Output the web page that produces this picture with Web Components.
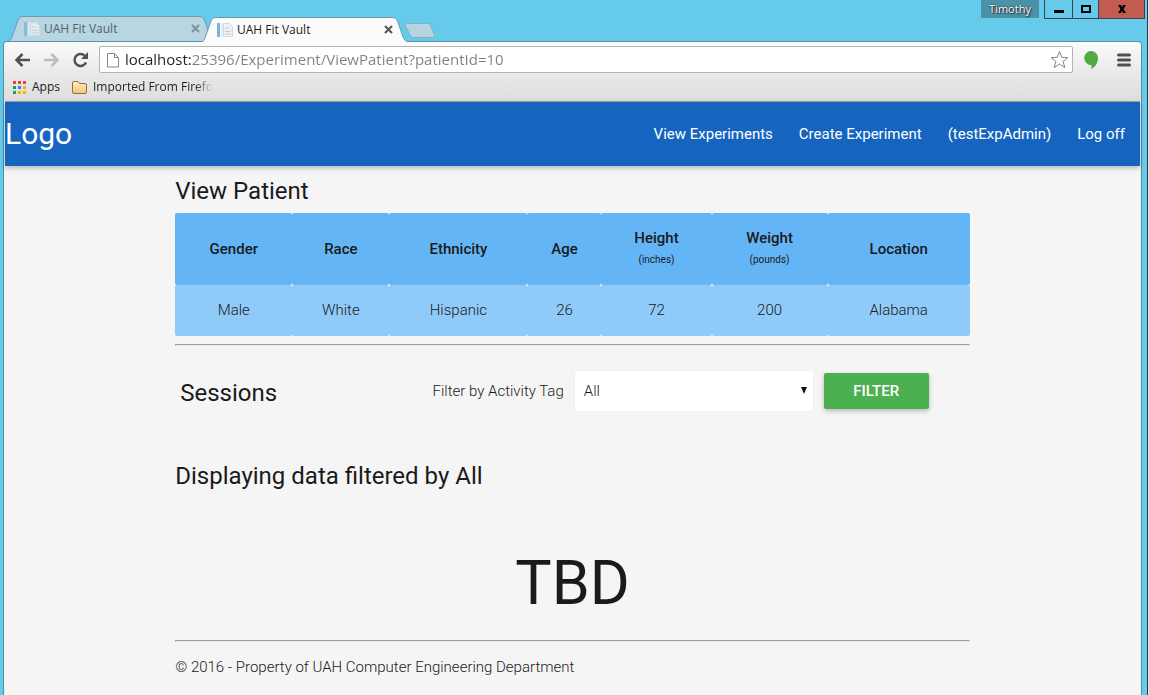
<!DOCTYPE html>
<html lang="en">
<head>
<meta charset="utf-8">
<title>UAH Fit Vault</title>
<style>
  html, body { margin: 0; height: 100%; }
  body { font-family: Roboto, "Liberation Sans", sans-serif; background: #66cbea; }
</style>
</head>
<body>
<desktop-window user="Timothy">
  <browser-tab slot="tabs" label="UAH Fit Vault"></browser-tab>
  <browser-tab slot="tabs" label="UAH Fit Vault" active></browser-tab>
  <browser-toolbar slot="chrome" url="localhost:25396/Experiment/ViewPatient?patientId=10"></browser-toolbar>
  <bookmarks-bar slot="chrome"></bookmarks-bar>
  <site-nav>
    <a href="#experiments">View Experiments</a>
    <a href="#create">Create Experiment</a>
    <a href="#account">(testExpAdmin)</a>
    <a href="#logoff">Log off</a>
  </site-nav>
  <page-content>
    <patient-table></patient-table>
    <session-filter></session-filter>
    <session-results filter="All"></session-results>
    <span slot="footer">© 2016 - Property of UAH Computer Engineering Department</span>
  </page-content>
</desktop-window>

<script>
const define = (name, render) => customElements.define(name, class extends HTMLElement {
  constructor() { super(); this.attachShadow({ mode: 'open' }); }
  connectedCallback() { this.shadowRoot.innerHTML = render(this); }
});

define('desktop-window', el => `
<style>
  :host { display: flex; flex-direction: column; box-sizing: border-box; min-height: 100%; background: #66cbea;
    border-right: 1px solid #d8e6ea; }
  .outer { flex: 1; display: flex; flex-direction: column; padding: 0 5px 0 3px; border-right: 1px solid #2b3b42; }
  header { display: flex; justify-content: space-between; height: 41px; }
  .tabs { display: flex; align-items: flex-end; padding-left: 8px; }
  .new { width: 32px; height: 20px; padding: 0; border: 0; background: none; align-self: center; margin: 20px 0 0; }
  .new svg { display: block; }
  .controls { display: flex; align-items: flex-start; }
  .user { width: 58px; height: 18px; margin-right: 5px; background: #4a92a8; color: #fff; text-align: center;
    font: 11px/17px "Open Sans", sans-serif; text-shadow: 0 0 2px #222, 1px 1px 1px #333; }
  .controls button { box-sizing: border-box; width: 29px; height: 19px; padding: 0; border: 1px solid #3c444a; border-top: 0;
    background: #66cbea; margin-right: -1px; display: grid; place-items: center; }
  .controls .max { width: 27px; }
  .controls .close { width: 47px; background: #c25b50; margin-right: -3px; }
  .browser { flex: 1; display: flex; flex-direction: column; border: 1px solid #4c93aa; border-bottom: 0; border-radius: 4px 4px 0 0;
    background: #f0f0f0; }
  main { flex: 1; margin: 0 1px; background: #f5f5f5; border-top: 1px solid #a3a3a3; }
</style>
<div class="outer">
  <header>
    <div class="tabs"><slot name="tabs"></slot>
      <button class="new" aria-label="New tab"><svg width="32" height="17" viewBox="0 0 32 17"><path d="M3 1.500H24Q26 1.500 27 4L30.500 13Q31 15.500 29 15.500H9Q7 15.500 6 13L1.500 4Q1 1.500 3 1.500Z" fill="#b7d3e0" stroke="#7fb0c3"/></svg></button>
    </div>
    <div class="controls">
      <span class="user">${el.getAttribute('user')}</span>
      <button aria-label="Minimize"><svg width="12" height="10"><path d="M1 6h10v3H1z"/></svg></button>
      <button class="max" aria-label="Maximize"><svg width="12" height="10"><path d="M2 2h8v6H2z" fill="none" stroke="#000" stroke-width="2"/></svg></button>
      <button class="close" aria-label="Close"><svg width="10" height="10"><path d="M1 1h3l1 2 1-2h3L6.500 5 9 9H6L5 7 4 9H1l2.500-4z"/></svg></button>
    </div>
  </header>
  <div class="browser"><slot name="chrome"></slot><main><slot></slot></main></div>
</div>`);

define('browser-tab', el => {
  const on = el.hasAttribute('active');
  return `
<style>
  :host { display: block; position: relative; width: 200px; height: 25px; margin-right: ${on ? 0 : -7}px; margin-bottom: ${on ? -1 : 0}px;
    z-index: ${on ? 2 : 1}; color: ${on ? '#222' : '#4b6470'}; font: 12px/25px "Open Sans", sans-serif; }
  .shape { position: absolute; inset: 0; overflow: visible; }
  .row { position: relative; display: flex; align-items: center; gap: 4px; padding: 0 8px 0 13px; }
  .row svg { opacity: ${on ? 1 : .75}; }
  .label { flex: 1; }
  button { width: 15px; height: 15px; padding: 0; border: 0; background: none; display: grid; place-items: center; }
</style>
<svg class="shape" width="200" height="25" viewBox="0 0 200 25">
  <path d="M-2 25Q0 24 1 21L7 4Q8 .500 11 .500H189Q192 .500 193.500 4L199 20Q200.500 24 204 25" fill="${on ? '#fbfbfb' : '#b9d5e2'}" stroke="#6b9db0"/>
</svg>
<div class="row">
  <svg width="16" height="16" viewBox="0 0 16 16"><path d="M0 1h3v14H0z" fill="#78b4dc"/><path d="M4 1h7v14H4z" fill="#e3edf5"/><path d="M6.500 1.500h6l3 3v10h-9z" fill="#eef1f5" stroke="#d3dbe2"/><path d="M8 6h4M8 9.500h6M8 12h6" stroke="#c5cdd5"/></svg>
  <span class="label">${el.getAttribute('label')}</span>
  <button aria-label="Close tab"><svg width="9" height="9"><path d="M1 1l7 7M8 1L1 8" stroke="${on ? '#555' : '#637f8b'}" stroke-width="2"/></svg></button>
</div>`;
});

define('browser-toolbar', el => `
<style>
  :host { display: flex; align-items: center; height: 35px; padding: 0 3px 0 8px; border-radius: 4px 4px 0 0;
    background: linear-gradient(#fbfbfb, #e7e7e7); font-family: "Open Sans", sans-serif; }
  button { width: 29px; height: 24px; padding: 0; border: 0; background: none; display: grid; place-items: center; flex: none; }
  .back, .forward, .reload { justify-items: start; padding-left: 2px; }
  .omnibox { flex: 1; box-sizing: border-box; height: 27px; display: flex; align-items: center; border: 1px solid #b4b4b4; border-radius: 2px;
    background: #fff; padding: 0 2px 0 7px; }
  input { flex: 1; min-width: 0; height: 24px; margin: 0 0 0 6px; padding: 0 0 2px; box-sizing: border-box; border: 0; outline: 0; font: 15px/22px "Open Sans", sans-serif;
    background: linear-gradient(90deg, #222 66px, #808080 66px); -webkit-background-clip: text; background-clip: text; -webkit-text-fill-color: transparent; }
  .star { width: 22px; }
  .ext { width: 36px; }
</style>
<button class="back" aria-label="Back"><svg width="17" height="14"><path d="M16 7H3M8.500 1l-6 6 6 6" fill="none" stroke="#505050" stroke-width="2.500"/></svg></button>
<button class="forward" aria-label="Forward"><svg width="17" height="14"><path d="M1 7h13M8.500 1l6 6-6 6" fill="none" stroke="#bdbdbd" stroke-width="2.500"/></svg></button>
<button class="reload" aria-label="Reload"><svg width="17" height="16"><path d="M14 10.500A6 6 0 1 1 12.500 3.500" fill="none" stroke="#505050" stroke-width="2.500"/><path d="M16 0v7H9z" fill="#505050"/></svg></button>
<div class="omnibox">
  <svg width="12" height="16"><path d="M.500 1.500h7l4 4v9.500H.500zM7.500 1.500v4h4" fill="#fff" stroke="#878787"/></svg>
  <input type="text" aria-label="Address" value="${el.getAttribute('url')}">
  <button class="star" aria-label="Bookmark this page"><svg width="19" height="19" viewBox="0 0 19 19"><path d="M9.500 1.500l2.300 5.800 6 .300-4.700 3.900 1.700 6-5.300-3.400-5.300 3.400 1.700-6L1.200 7.600l6-.300z" fill="#fff" stroke="#858585"/></svg></button>
</div>
<button class="ext" aria-label="Hangouts"><svg width="14" height="18"><path d="M7 0a7 7 0 0 1 7 7c0 5-3 9-6.500 11v-4A7 7 0 0 1 7 0z" fill="#51ab42"/></svg></button>
<button aria-label="Menu"><svg width="14" height="14"><path d="M1.500 2h11M1.500 7h11M1.500 12h11" stroke="#505050" stroke-width="3" stroke-linecap="round"/></svg></button>`);

define('bookmarks-bar', () => `
<style>
  :host { display: flex; align-items: center; box-sizing: border-box; height: 24px; padding: 0 0 4px 9px; background: linear-gradient(#e7e7e7, #dedede);
    font: 12px/18px "Open Sans", sans-serif; }
  a { display: flex; align-items: center; gap: 6px; color: #222; text-decoration: none; margin-right: 12px; }
  .fade { white-space: nowrap; -webkit-mask-image: linear-gradient(90deg, #000 85%, transparent); mask-image: linear-gradient(90deg, #000 85%, transparent); }
</style>
<a href="#apps"><svg width="13" height="13"><path d="M0 0h3v3H0zM5 0h3v3H5zM10 0h3v3h-3z" fill="#ea4335"/><path d="M0 5h3v3H0zM0 10h3v3H0z" fill="#1aa35f"/><path d="M5 5h3v3H5z" fill="#1a8cff"/><path d="M10 5h3v3h-3zM5 10h3v3H5zM10 10h3v3h-3z" fill="#fbb300"/></svg>Apps</a>
<a href="#imported"><svg width="15" height="13"><defs><linearGradient id="f" x2="0" y2="1"><stop stop-color="#fff0c4"/><stop offset="1" stop-color="#f1c478"/></linearGradient></defs><path d="M.500 11V2Q.500.500 2 .500h4L7.500 2.500H13Q14.500 2.500 14.500 4v7Q14.500 12.500 13 12.500H2Q.500 12.500.500 11z" fill="url(#f)" stroke="#93703c"/></svg><span class="fade">Imported From Firefo</span></a>`);

define('site-nav', () => `
<style>
  :host { display: flex; align-items: center; justify-content: space-between; height: 64px; background: #1565c0; color: #fff;
    box-shadow: 0 2px 5px rgba(0,0,0,.26); }
  .logo { color: #fff; text-decoration: none; font-size: 30px; line-height: 64px; }
  nav { display: flex; gap: 26px; padding-right: 15px; }
  ::slotted(a) { color: #fff; text-decoration: none; font-size: 15px; line-height: 64px; }
</style>
<a class="logo" href="#home">Logo</a>
<nav><slot></slot></nav>`);

define('page-content', () => `
<style>
  :host { display: block; width: 70%; margin: 0 auto; padding-top: 10px; color: #1a1a1a; font-size: 15px; font-weight: 300; line-height: 21px; }
  hr { margin: 8px 0; border-width: 1px; }
  footer { padding: 7px 0 17px; }
</style>
<slot></slot>
<hr>
<footer><slot name="footer"></slot></footer>`);

define('patient-table', () => `
<style>
  :host { display: block; }
  h2 { margin: 0 0 7px; font-size: 24px; line-height: 30px; font-weight: 400; }
  table { width: 100%; border-collapse: collapse; text-align: center; }
  th, td { padding: 15px 5px; border-radius: 2px; }
  th { font-weight: 500; background: #64b5f6; }
  td { background: #90caf9; }
  small { display: block; font-size: 10px; font-weight: 400; }
  hr { margin: 8px 0; border-width: 1px; }
</style>
<h2>View Patient</h2>
<table>
  <colgroup><col style="width:117px"><col style="width:97px"><col style="width:138px"><col style="width:74px"><col style="width:110px"><col style="width:116px"><col style="width:142px"></colgroup>
  <thead><tr><th scope="col">Gender</th><th scope="col">Race</th><th scope="col">Ethnicity</th><th scope="col">Age</th><th scope="col">Height <small>(inches)</small></th><th scope="col">Weight <small>(pounds)</small></th><th scope="col">Location</th></tr></thead>
  <tbody><tr><td>Male</td><td>White</td><td>Hispanic</td><td>26</td><td>72</td><td>200</td><td>Alabama</td></tr></tbody>
</table>
<hr>`);

define('session-filter', () => `
<style>
  :host { display: flex; align-items: center; justify-content: space-between; padding: 16px 41px 0 5px; }
  h2 { margin: 0; padding-top: 4px; font-size: 24px; line-height: 38px; font-weight: 400; }
  form { display: flex; align-items: center; gap: 10px; }
  .select { position: relative; display: flex; }
  select { appearance: none; box-sizing: border-box; width: 240px; height: 42px; padding: 0 9px; border: 1px solid #f2f2f2; border-radius: 2px;
    background: #fff; color: #1a1a1a; font: 300 15px Roboto, sans-serif; }
  .select svg { position: absolute; right: 7px; top: 17px; pointer-events: none; }
  button { width: 105px; height: 36px; border: 0; border-radius: 2px; background: #4caf50; color: #fff; font: 500 15px Roboto, sans-serif;
    text-transform: uppercase; box-shadow: 0 2px 5px rgba(0,0,0,.26); }
</style>
<h2>Sessions</h2>
<form>
  <label for="tag">Filter by Activity Tag</label>
  <span class="select"><select id="tag"><option>All</option></select><svg width="6" height="7"><path d="M0 0h6L3 7z" fill="#111"/></svg></span>
  <button type="button">Filter</button>
</form>`);

define('session-results', el => `
<style>
  :host { display: block; padding-top: 49px; }
  h2 { margin: 0; font-size: 24px; line-height: 30px; font-weight: 400; }
  p { margin: 56px 0 21px; text-align: center; font-size: 61px; line-height: 72px; font-weight: 400; }
</style>
<h2>Displaying data filtered by ${el.getAttribute('filter')}</h2>
<p>TBD</p>`);
</script>
</body>
</html>
